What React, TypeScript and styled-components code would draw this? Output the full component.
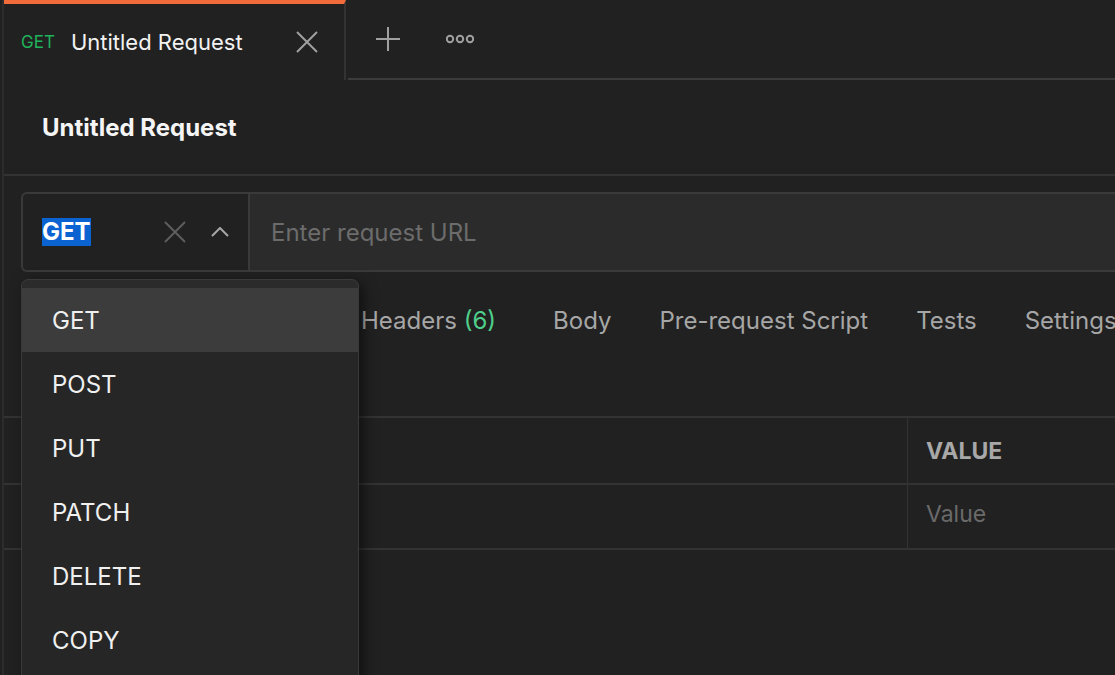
import styled, { createGlobalStyle } from "styled-components";

const GlobalStyle = createGlobalStyle`
  html, body {
    margin: 0;
    padding: 0;
    background: #212121;
    font-family: Inter, "Noto Sans", "Liberation Sans", sans-serif;
    overflow: hidden;
  }
`;

const Shell = styled.div`
  margin-left: 2px;
  border-left: 2px solid #2c2c2c;
  height: 675px;
  background: #212121;
  position: relative;
  overflow: hidden;
`;

const TabBar = styled.div`
  display: flex;
  height: 80px;
`;

const Tab = styled.div`
  width: 342px;
  box-sizing: border-box;
  border-top: 4px solid #f26b3a;
  border-right: 2px solid #333;
  display: flex;
  align-items: center;
  padding: 0 26px 0 17px;
`;

const MethodTag = styled.span`
  color: #1fb25a;
  font-size: 17px;
  margin-right: 16px;
`;

const TabTitle = styled.span`
  color: #f2f2f2;
  font-size: 22px;
  flex: 1;
  white-space: nowrap;
`;

const TabActions = styled.div`
  flex: 1;
  margin-left: 2px;
  border-bottom: 2px solid #3c3c3c;
  display: flex;
  align-items: center;
  gap: 46px;
  padding-left: 28px;
`;

const IconButton = styled.span<{ $tone?: string }>`
  display: inline-flex;
  color: ${(p) => p.$tone || "#a0a0a0"};
`;

const TitleBar = styled.div`
  height: 94px;
  border-bottom: 2px solid #333;
  display: flex;
  align-items: center;
  padding-left: 38px;
  color: #f5f5f5;
  font-size: 24px;
  font-weight: 700;
`;

const RequestArea = styled.div`
  padding: 16px 0 0 17px;
`;

const UrlBar = styled.div`
  display: flex;
  height: 80px;
  box-sizing: border-box;
  border: 2px solid #3a3a3a;
  border-right: none;
  border-radius: 6px 0 0 6px;
`;

const MethodSelect = styled.div`
  width: 227px;
  border-right: 2px solid #3a3a3a;
  display: flex;
  align-items: center;
  padding: 0 19px;
  box-sizing: border-box;
`;

const SelectedMethod = styled.span`
  background: #0b63d1;
  color: #fff;
  font-size: 24px;
  font-weight: 700;
  line-height: 28px;
  flex: none;
`;

const SelectIcons = styled.div`
  margin-left: auto;
  display: flex;
  align-items: center;
  gap: 25px;
`;

const UrlInput = styled.div`
  flex: 1;
  background: #2b2b2b;
  display: flex;
  align-items: center;
  padding-left: 21px;
  color: #6c6c6c;
  font-size: 24px;
  white-space: nowrap;
`;

/* Params / Authorization sit under the open method menu, so the row
   starts where the first visible tab begins */
const Tabs = styled.div`
  display: flex;
  align-items: center;
  height: 64px;
  margin-top: 16px;
  gap: 48px;
  padding-left: 340px;
`;

const TabLabel = styled.span<{ $extra?: number }>`
  color: #a6a6a6;
  font-size: 24px;
  white-space: nowrap;
  margin-right: ${(p) => p.$extra || 0}px;
`;

const Count = styled.span`
  color: #4fcf8b;
`;

const Spacer = styled.div`
  height: 64px;
`;

const Table = styled.div`
  border-top: 2px solid #333;
`;

const Row = styled.div<{ $h: number }>`
  display: grid;
  grid-template-columns: 903px 1fr;
  height: ${(p) => p.$h}px;
  border-bottom: 2px solid #333;
`;

const Cell = styled.div<{ $head?: boolean }>`
  display: flex;
  align-items: center;
  padding-left: 18px;
  padding-bottom: ${(p) => (p.$head ? 0 : 6)}px;
  font-size: 23px;
  color: ${(p) => (p.$head ? "#a8a8a8" : "#6a6a6a")};
  font-weight: ${(p) => (p.$head ? 700 : 400)};
  & + & {
    border-left: 1px solid #333;
  }
`;

const Menu = styled.div`
  position: absolute;
  left: 17px;
  top: 279px;
  width: 338px;
  box-sizing: border-box;
  background: #262626;
  border: 1px solid #3a3a3a;
  border-radius: 7px;
  padding: 8px 0 12px;
  box-shadow: 4px 4px 14px rgba(0, 0, 0, 0.55);
  background-image: linear-gradient(#2b2b2b 0 8px, transparent 8px);
`;

const MenuItem = styled.div<{ $active?: boolean }>`
  height: 64px;
  display: flex;
  align-items: center;
  padding-left: 30px;
  font-size: 24px;
  color: #f0f0f0;
  background: ${(p) => (p.$active ? "#3c3c3c" : "transparent")};
`;

const Cross = ({ size = 22 }: { size?: number }) => (
  <svg width={size} height={size} viewBox="0 0 22 22" fill="none">
    <path d="M1 1L21 21M21 1L1 21" stroke="currentColor" strokeWidth="2" />
  </svg>
);

const Plus = () => (
  <svg width="24" height="24" viewBox="0 0 24 24" fill="none">
    <path d="M12 0V24M0 12H24" stroke="currentColor" strokeWidth="2" />
  </svg>
);

const Dots = () => (
  <svg width="28" height="10" viewBox="0 0 28 10" fill="none">
    <circle cx="4" cy="5" r="3.2" stroke="currentColor" strokeWidth="2" />
    <circle cx="14" cy="5" r="3.2" stroke="currentColor" strokeWidth="2" />
    <circle cx="24" cy="5" r="3.2" stroke="currentColor" strokeWidth="2" />
  </svg>
);

const ChevronUp = () => (
  <svg width="18" height="10" viewBox="0 0 18 10" fill="none">
    <path d="M1 9L9 1L17 9" stroke="currentColor" strokeWidth="2" />
  </svg>
);

const methods = ["GET", "POST", "PUT", "PATCH", "DELETE", "COPY"];

const App = () => {
  return (
    <Shell>
      <GlobalStyle />
      <TabBar>
        <Tab>
          <MethodTag>GET</MethodTag>
          <TabTitle>Untitled Request</TabTitle>
          <IconButton>
            <Cross />
          </IconButton>
        </Tab>
        <TabActions>
          <IconButton>
            <Plus />
          </IconButton>
          <IconButton>
            <Dots />
          </IconButton>
        </TabActions>
      </TabBar>

      <TitleBar>Untitled Request</TitleBar>

      <RequestArea>
        <UrlBar>
          <MethodSelect>
            <SelectedMethod>GET</SelectedMethod>
            <SelectIcons>
              <IconButton $tone="#5e5e5e">
                <Cross />
              </IconButton>
              <IconButton $tone="#a8a8a8">
                <ChevronUp />
              </IconButton>
            </SelectIcons>
          </MethodSelect>
          <UrlInput>Enter request URL</UrlInput>
        </UrlBar>

        <Tabs>
          <TabLabel $extra={9}>
            Headers <Count>(6)</Count>
          </TabLabel>
          <TabLabel>Body</TabLabel>
          <TabLabel>Pre-request Script</TabLabel>
          <TabLabel>Tests</TabLabel>
          <TabLabel>Settings</TabLabel>
        </Tabs>
        <Spacer />
      </RequestArea>

      <Table>
        <Row $h={65}>
          <Cell $head />
          <Cell $head>VALUE</Cell>
        </Row>
        <Row $h={63}>
          <Cell />
          <Cell>Value</Cell>
        </Row>
      </Table>

      <Menu>
        {methods.map((m, i) => (
          <MenuItem key={m} $active={i === 0}>
            {m}
          </MenuItem>
        ))}
      </Menu>
    </Shell>
  );
};

export default App;
